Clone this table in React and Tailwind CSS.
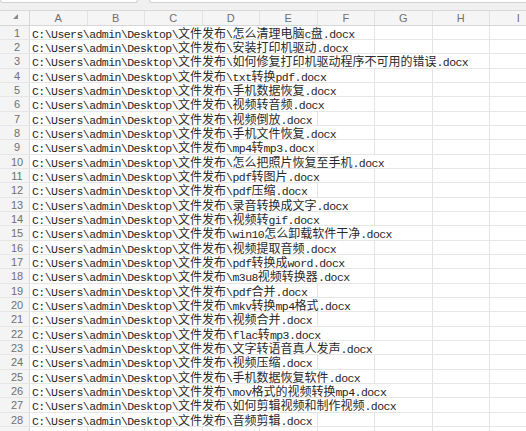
import React from 'react';

const files = [
  '怎么清理电脑c盘',
  '安装打印机驱动',
  '如何修复打印机驱动程序不可用的错误',
  'txt转换pdf',
  '手机数据恢复',
  '视频转音频',
  '视频倒放',
  '手机文件恢复',
  'mp4转mp3',
  '怎么把照片恢复至手机',
  'pdf转图片',
  'pdf压缩',
  '录音转换成文字',
  '视频转gif',
  'win10怎么卸载软件干净',
  '视频提取音频',
  'pdf转换成word',
  'm3u8视频转换器',
  'pdf合并',
  'mkv转换mp4格式',
  '视频合并',
  'flac转mp3',
  '文字转语音真人发声',
  '视频压缩',
  '手机数据恢复软件',
  'mov格式的视频转换mp4',
  '如何剪辑视频和制作视频',
  '音频剪辑',
];

const cols = ['A', 'B', 'C', 'D', 'E', 'F', 'G', 'H', 'I'];

// half-width latin in a mono face, CJK runs a bit under double width
const PathText = ({ text }) => {
  const parts = text.split(/([\u3400-\u9fff]+)/);
  return (
    <span className="relative z-10 block w-max h-full bg-white pl-[2px] pr-[3px] whitespace-nowrap text-[11.5px] tracking-[-0.55px] leading-[14px] text-[#1f1f1f] font-['Liberation_Mono',monospace]">
      {parts.map((p, i) =>
        i % 2 === 1 ? (
          <span
            key={i}
            className="text-[12px] tracking-[0px] text-[#2a2a2a] font-['Noto_Sans_CJK_SC',sans-serif]"
          >
            {p}
          </span>
        ) : (
          <span key={i}>{p}</span>
        )
      )}
    </span>
  );
};

const Row = ({ n, text }) => (
  <div className="flex h-[14.33px] shrink-0 border-b border-[#e6e6e6]">
    <div className="w-[30px] shrink-0 bg-[#f4f4f4] border-r border-[#d8d8d8] pl-[5px] text-center text-[11px] leading-[14px] text-[#707070]">
      {n}
    </div>
    {cols.map((c, i) => (
      <div key={c} className="w-[57.5px] shrink-0 border-r border-[#e4e4e4]">
        {i === 0 && text ? <PathText text={text} /> : null}
      </div>
    ))}
  </div>
);

export default function App() {
  return (
    <div className="w-[526px] h-[431px] overflow-hidden bg-white flex flex-col font-['Liberation_Sans',sans-serif]">
      {/* formula bar edge */}
      <div className="h-[11px] shrink-0 bg-[#f0f0f0] flex items-start border-b border-[#d9d9d9]">
        <div className="w-[138px] h-[3px] bg-white border border-t-0 border-[#d2d2d2] rounded-b-[3px]" />
        <div className="ml-[11px] flex-1 h-[3px] bg-white border border-t-0 border-r-0 border-[#d2d2d2] rounded-bl-[3px]" />
      </div>

      {/* column headers */}
      <div className="flex h-[14.83px] shrink-0 bg-[#f5f5f5] border-b border-[#d6d6d6]">
        <div className="w-[30px] shrink-0 border-r border-[#d8d8d8] flex items-start pt-[3px] pl-[13px]">
          <svg width="5" height="5" viewBox="0 0 5 5">
            <polygon points="5,0 5,5 0,5" fill="#8a8a8a" />
          </svg>
        </div>
        {cols.map((c) => (
          <div
            key={c}
            className="w-[57.5px] shrink-0 border-r border-[#e2e2e2] text-center text-[11px] leading-[14px] text-[#707070]"
          >
            {c}
          </div>
        ))}
      </div>

      {files.map((f, i) => (
        <Row key={i} n={i + 1} text={`C:\\Users\\admin\\Desktop\\文件发布\\${f}.docx`} />
      ))}
      {/* partial empty row at the bottom edge */}
      <Row n="" />
    </div>
  );
}
